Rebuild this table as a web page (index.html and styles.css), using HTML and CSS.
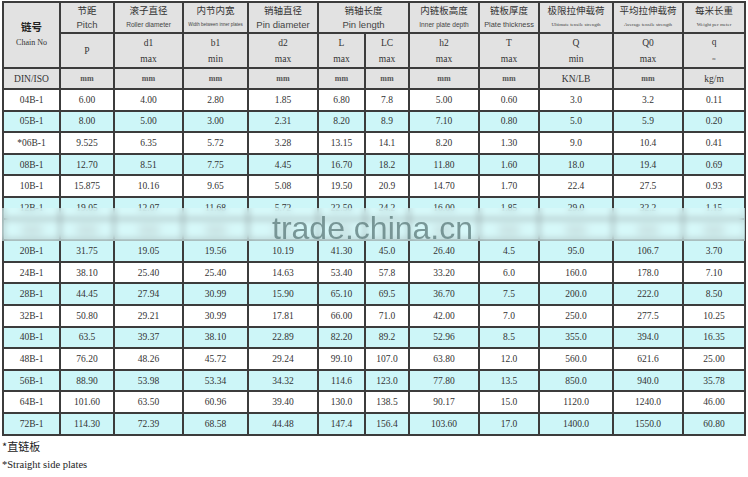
FILE: index.html
```html
<!DOCTYPE html>
<html lang="zh">
<head>
<meta charset="utf-8">
<title>Chain specification</title>
<link rel="stylesheet" href="styles.css">
</head>
<body>
<div class="sheet">
<table class="spec">
<colgroup>
<col style="width:57px"><col style="width:54px"><col style="width:69px"><col style="width:65px"><col style="width:70px"><col style="width:47px"><col style="width:44px"><col style="width:70px"><col style="width:60px"><col style="width:74px"><col style="width:70px"><col style="width:62px">
</colgroup>
<thead>
<tr class="h1">
<th rowspan="2" class="chain"><div class="zh-b">链号</div><div class="en-serif">Chain No</div></th>
<th><div class="zh">节距</div><div class="en">Pitch</div></th>
<th><div class="zh">滚子直径</div><div class="en en-s">Roller diameter</div></th>
<th><div class="zh">内节内宽</div><div class="en en-xs">Width between inner plates</div></th>
<th><div class="zh">销轴直径</div><div class="en">Pin diameter</div></th>
<th colspan="2"><div class="zh">销轴长度</div><div class="en">Pin length</div></th>
<th><div class="zh">内链板高度</div><div class="en en-s">Inner plate depth</div></th>
<th><div class="zh">链板厚度</div><div class="en en-m">Plate thickness</div></th>
<th><div class="zh">极限拉伸载荷</div><div class="en-tiny">Ultimate tensile strength</div></th>
<th><div class="zh">平均拉伸载荷</div><div class="en-tiny">Average tensile strength</div></th>
<th><div class="zh">每米长重</div><div class="en-tiny">Weight per meter</div></th>
</tr>
<tr class="h2">
<th>P</th>
<th>d1<br>max</th>
<th>b1<br>min</th>
<th>d2<br>max</th>
<th>L<br>max</th>
<th>LC<br>max</th>
<th>h2<br>max</th>
<th>T<br>max</th>
<th>Q<br>min</th>
<th>Q0<br>max</th>
<th>q<br><span class="approx">≈</span></th>
</tr>
<tr class="unit">
<th>DIN/ISO</th><th class="mm">mm</th><th class="mm">mm</th><th class="mm">mm</th><th class="mm">mm</th><th class="mm">mm</th><th class="mm">mm</th><th class="mm">mm</th><th class="mm">mm</th><th>KN/LB</th><th class="mm">mm</th><th>kg/m</th>
</tr>
</thead>
<tbody>
<tr><td>04B-1</td><td>6.00</td><td>4.00</td><td>2.80</td><td>1.85</td><td>6.80</td><td>7.8</td><td>5.00</td><td>0.60</td><td>3.0</td><td>3.2</td><td>0.11</td></tr>
<tr class="alt"><td>05B-1</td><td>8.00</td><td>5.00</td><td>3.00</td><td>2.31</td><td>8.20</td><td>8.9</td><td>7.10</td><td>0.80</td><td>5.0</td><td>5.9</td><td>0.20</td></tr>
<tr><td>*06B-1</td><td>9.525</td><td>6.35</td><td>5.72</td><td>3.28</td><td>13.15</td><td>14.1</td><td>8.20</td><td>1.30</td><td>9.0</td><td>10.4</td><td>0.41</td></tr>
<tr class="alt"><td>08B-1</td><td>12.70</td><td>8.51</td><td>7.75</td><td>4.45</td><td>16.70</td><td>18.2</td><td>11.80</td><td>1.60</td><td>18.0</td><td>19.4</td><td>0.69</td></tr>
<tr><td>10B-1</td><td>15.875</td><td>10.16</td><td>9.65</td><td>5.08</td><td>19.50</td><td>20.9</td><td>14.70</td><td>1.70</td><td>22.4</td><td>27.5</td><td>0.93</td></tr>
<tr class="alt"><td>12B-1</td><td>19.05</td><td>12.07</td><td>11.68</td><td>5.72</td><td>22.50</td><td>24.2</td><td>16.00</td><td>1.85</td><td>29.0</td><td>32.2</td><td>1.15</td></tr>
<tr class="alt smudged"><td><i class="blob"></i></td><td><i class="blob"></i></td><td><i class="blob"></i></td><td><i class="blob"></i></td><td><i class="blob"></i></td><td><i class="blob"></i></td><td><i class="blob"></i></td><td><i class="blob"></i></td><td><i class="blob"></i></td><td><i class="blob"></i></td><td><i class="blob"></i></td><td><i class="blob"></i></td></tr>
<tr class="alt"><td>20B-1</td><td>31.75</td><td>19.05</td><td>19.56</td><td>10.19</td><td>41.30</td><td>45.0</td><td>26.40</td><td>4.5</td><td>95.0</td><td>106.7</td><td>3.70</td></tr>
<tr><td>24B-1</td><td>38.10</td><td>25.40</td><td>25.40</td><td>14.63</td><td>53.40</td><td>57.8</td><td>33.20</td><td>6.0</td><td>160.0</td><td>178.0</td><td>7.10</td></tr>
<tr class="alt"><td>28B-1</td><td>44.45</td><td>27.94</td><td>30.99</td><td>15.90</td><td>65.10</td><td>69.5</td><td>36.70</td><td>7.5</td><td>200.0</td><td>222.0</td><td>8.50</td></tr>
<tr><td>32B-1</td><td>50.80</td><td>29.21</td><td>30.99</td><td>17.81</td><td>66.00</td><td>71.0</td><td>42.00</td><td>7.0</td><td>250.0</td><td>277.5</td><td>10.25</td></tr>
<tr class="alt"><td>40B-1</td><td>63.5</td><td>39.37</td><td>38.10</td><td>22.89</td><td>82.20</td><td>89.2</td><td>52.96</td><td>8.5</td><td>355.0</td><td>394.0</td><td>16.35</td></tr>
<tr><td>48B-1</td><td>76.20</td><td>48.26</td><td>45.72</td><td>29.24</td><td>99.10</td><td>107.0</td><td>63.80</td><td>12.0</td><td>560.0</td><td>621.6</td><td>25.00</td></tr>
<tr class="alt"><td>56B-1</td><td>88.90</td><td>53.98</td><td>53.34</td><td>34.32</td><td>114.6</td><td>123.0</td><td>77.80</td><td>13.5</td><td>850.0</td><td>940.0</td><td>35.78</td></tr>
<tr><td>64B-1</td><td>101.60</td><td>63.50</td><td>60.96</td><td>39.40</td><td>130.0</td><td>138.5</td><td>90.17</td><td>15.0</td><td>1120.0</td><td>1240.0</td><td>46.00</td></tr>
<tr class="alt"><td>72B-1</td><td>114.30</td><td>72.39</td><td>68.58</td><td>44.48</td><td>147.4</td><td>156.4</td><td>103.60</td><td>17.0</td><td>1400.0</td><td>1550.0</td><td>60.80</td></tr>
</tbody>
</table>
<div class="watermark"><span class="wm-text">trade.china.cn</span></div>
</div>
<p class="note note-zh">*直链板</p>
<p class="note note-en">*Straight side plates</p>
</body>
</html>
```
FILE: styles.css
```css
html, body {
  margin: 0;
  padding: 0;
  background: #ffffff;
}
body {
  padding: 1px 0 0 2px;
  font-family: "Liberation Serif", "Times New Roman", serif;
  color: #333;
}
.sheet {
  position: relative;
  width: 743px;
}
.spec {
  border-collapse: collapse;
  table-layout: fixed;
  width: 743px;
  border: 2px solid #2b2b2b;
}
.spec th, .spec td {
  border: 2px solid #3c3c3c;
  padding: 0;
  text-align: center;
  vertical-align: middle;
  overflow: hidden;
  white-space: nowrap;
}
.spec thead th {
  background: #e2e2e2;
  font-weight: normal;
  color: #333;
}
.h1 th {
  height: 29px;
}
.h1 .zh {
  font-family: "Noto Sans CJK SC", sans-serif;
  font-size: 9.5px;
  line-height: 14px;
  color: #333;
}
.h1 .en {
  font-family: "Liberation Sans", Arial, sans-serif;
  font-size: 9.5px;
  line-height: 15px;
  color: #444;
}
.h1 .en-s { font-size: 6.6px; }
.h1 .en-m { font-size: 7.4px; }
.h1 .en-xs { font-size: 4.5px; }
.h1 .en-tiny {
  font-family: "Liberation Serif", serif;
  font-size: 5px;
  line-height: 15px;
  color: #444;
}
.chain .zh-b {
  font-family: "Noto Sans CJK SC", sans-serif;
  font-weight: bold;
  font-size: 10.5px;
  line-height: 16px;
  color: #222;
}
.chain .en-serif {
  font-size: 8px;
  line-height: 16px;
  color: #333;
}
.h2 th {
  height: 27px;
  font-size: 9.5px;
  line-height: 16px;
}
.approx {
  font-size: 6px;
}
.unit th {
  height: 19px;
  font-size: 9.5px;
}
.unit .mm {
  font-size: 8px;
  font-weight: bold;
  color: #555;
}
.spec tbody td {
  height: 19.6px;
  font-size: 9.5px;
  color: #333;
  background: #ffffff;
}
.spec tbody tr.alt td {
  background: #cdf6f8;
}
.blob {
  display: inline-block;
  width: 20px;
  height: 8px;
  background: #9aa6a6;
  filter: blur(3px);
  opacity: 0.8;
  vertical-align: middle;
}
.watermark {
  position: absolute;
  left: 0;
  top: 207px;
  width: 743px;
  height: 33px;
  background: rgba(222, 250, 250, 0.55);
  backdrop-filter: blur(3px);
}
.wm-text {
  position: absolute;
  left: 270px;
  top: 6px;
  font-family: "Liberation Sans", Arial, sans-serif;
  font-size: 32px;
  line-height: 28px;
  color: rgba(105, 135, 135, 0.85);
}
.note {
  margin: 0;
  color: #222;
}
.note-zh {
  font-family: "Noto Sans CJK SC", sans-serif;
  font-size: 11px;
  line-height: 18px;
  margin-top: 1px;
}
.note-en {
  font-size: 10.5px;
  line-height: 20px;
}
```
